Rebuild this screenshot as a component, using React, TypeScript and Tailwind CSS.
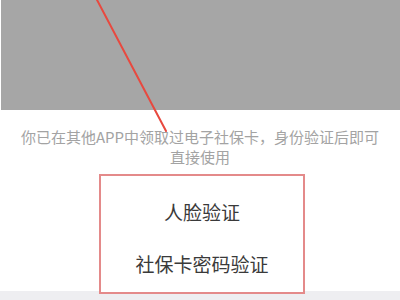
export default function App() {
  return (
    <div
      className="relative h-[300px] w-[400px] overflow-hidden bg-white"
      style={{ fontFamily: '"Noto Sans CJK SC", "Noto Sans", sans-serif' }}
    >
      <div className="ml-px h-[110px] bg-[#a6a6a6]" />
      <p className="px-[20px] pt-[17px] text-center text-[15px] leading-[20px] text-[#a3a3a3]">
        你已在其他APP中领取过电子社保卡，身份验证后即可
        <br />
        直接使用
      </p>
      <div className="relative z-10 ml-[99px] mt-[7px] flex h-[120px] w-[206px] flex-col items-center border-2 border-[#e48a8a] bg-white text-[19px] leading-[26px] text-[#3a3a3a]">
        <div className="mt-[23px]">人脸验证</div>
        <div className="mt-[26px]">社保卡密码验证</div>
      </div>
      <div className="absolute bottom-0 left-0 right-0 h-[9px] bg-[#eeeef1]" />
      <svg className="pointer-events-none absolute left-0 top-0" width="400" height="300">
        <line x1="96" y1="-2" x2="166" y2="131" stroke="#e8493f" strokeWidth="2" strokeLinecap="round" />
      </svg>
    </div>
  );
}
